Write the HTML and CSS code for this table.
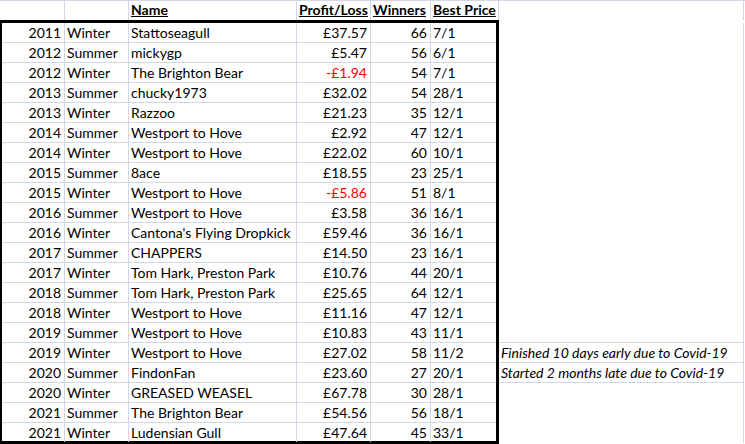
FILE: index.html
```html
<!DOCTYPE html>
<html>
<head>
<meta charset="utf-8">
<link rel="stylesheet" href="styles.css">
</head>
<body>
<div class="sheet">
  <div class="hdr">
    <div class="c ca"></div>
    <div class="c cb"></div>
    <div class="c cc h">Name</div>
    <div class="c cd h">Profit/Loss</div>
    <div class="c ce h">Winners</div>
    <div class="c cf h">Best Price</div>
    <div class="c cg"></div>
  </div>
  <div class="box">
    <div class="row"><div class="c ca r">2011</div><div class="c cb">Winter</div><div class="c cc">Stattoseagull</div><div class="c cd r">£37.57</div><div class="c ce r">66</div><div class="c cf">7/1</div></div>
    <div class="row"><div class="c ca r">2012</div><div class="c cb">Summer</div><div class="c cc">mickygp</div><div class="c cd r">£5.47</div><div class="c ce r">56</div><div class="c cf">6/1</div></div>
    <div class="row"><div class="c ca r">2012</div><div class="c cb">Winter</div><div class="c cc">The Brighton Bear</div><div class="c cd r neg">-£1.94</div><div class="c ce r">54</div><div class="c cf">7/1</div></div>
    <div class="row"><div class="c ca r">2013</div><div class="c cb">Summer</div><div class="c cc">chucky1973</div><div class="c cd r">£32.02</div><div class="c ce r">54</div><div class="c cf">28/1</div></div>
    <div class="row"><div class="c ca r">2013</div><div class="c cb">Winter</div><div class="c cc">Razzoo</div><div class="c cd r">£21.23</div><div class="c ce r">35</div><div class="c cf">12/1</div></div>
    <div class="row"><div class="c ca r">2014</div><div class="c cb">Summer</div><div class="c cc">Westport to Hove</div><div class="c cd r">£2.92</div><div class="c ce r">47</div><div class="c cf">12/1</div></div>
    <div class="row"><div class="c ca r">2014</div><div class="c cb">Winter</div><div class="c cc">Westport to Hove</div><div class="c cd r">£22.02</div><div class="c ce r">60</div><div class="c cf">10/1</div></div>
    <div class="row"><div class="c ca r">2015</div><div class="c cb">Summer</div><div class="c cc">8ace</div><div class="c cd r">£18.55</div><div class="c ce r">23</div><div class="c cf">25/1</div></div>
    <div class="row"><div class="c ca r">2015</div><div class="c cb">Winter</div><div class="c cc">Westport to Hove</div><div class="c cd r neg">-£5.86</div><div class="c ce r">51</div><div class="c cf">8/1</div></div>
    <div class="row"><div class="c ca r">2016</div><div class="c cb">Summer</div><div class="c cc">Westport to Hove</div><div class="c cd r">£3.58</div><div class="c ce r">36</div><div class="c cf">16/1</div></div>
    <div class="row"><div class="c ca r">2016</div><div class="c cb">Winter</div><div class="c cc">Cantona's Flying Dropkick</div><div class="c cd r">£59.46</div><div class="c ce r">36</div><div class="c cf">16/1</div></div>
    <div class="row"><div class="c ca r">2017</div><div class="c cb">Summer</div><div class="c cc">CHAPPERS</div><div class="c cd r">£14.50</div><div class="c ce r">23</div><div class="c cf">16/1</div></div>
    <div class="row"><div class="c ca r">2017</div><div class="c cb">Winter</div><div class="c cc">Tom Hark, Preston Park</div><div class="c cd r">£10.76</div><div class="c ce r">44</div><div class="c cf">20/1</div></div>
    <div class="row"><div class="c ca r">2018</div><div class="c cb">Summer</div><div class="c cc">Tom Hark, Preston Park</div><div class="c cd r">£25.65</div><div class="c ce r">64</div><div class="c cf">12/1</div></div>
    <div class="row"><div class="c ca r">2018</div><div class="c cb">Winter</div><div class="c cc">Westport to Hove</div><div class="c cd r">£11.16</div><div class="c ce r">47</div><div class="c cf">12/1</div></div>
    <div class="row"><div class="c ca r">2019</div><div class="c cb">Summer</div><div class="c cc">Westport to Hove</div><div class="c cd r">£10.83</div><div class="c ce r">43</div><div class="c cf">11/1</div></div>
    <div class="row"><div class="c ca r">2019</div><div class="c cb">Winter</div><div class="c cc">Westport to Hove</div><div class="c cd r">£27.02</div><div class="c ce r">58</div><div class="c cf">11/2</div></div>
    <div class="row"><div class="c ca r">2020</div><div class="c cb">Summer</div><div class="c cc">FindonFan</div><div class="c cd r">£23.60</div><div class="c ce r">27</div><div class="c cf">20/1</div></div>
    <div class="row"><div class="c ca r">2020</div><div class="c cb">Winter</div><div class="c cc">GREASED WEASEL</div><div class="c cd r">£67.78</div><div class="c ce r">30</div><div class="c cf">28/1</div></div>
    <div class="row"><div class="c ca r">2021</div><div class="c cb">Summer</div><div class="c cc">The Brighton Bear</div><div class="c cd r">£54.56</div><div class="c ce r">56</div><div class="c cf">18/1</div></div>
    <div class="row last"><div class="c ca r">2021</div><div class="c cb">Winter</div><div class="c cc">Ludensian Gull</div><div class="c cd r">£47.64</div><div class="c ce r">45</div><div class="c cf">33/1</div></div>
  </div>
  <div class="side">
    <div class="g"></div><div class="g"></div><div class="g"></div><div class="g"></div><div class="g"></div>
    <div class="g"></div><div class="g"></div><div class="g"></div><div class="g"></div><div class="g"></div>
    <div class="g"></div><div class="g"></div><div class="g"></div><div class="g"></div><div class="g"></div>
    <div class="g line"></div>
    <div class="g line note">Finished 10 days early due to Covid-19</div>
    <div class="g line note">Started 2 months late due to Covid-19</div>
    <div class="g"></div><div class="g"></div><div class="g"></div>
  </div>
</div>
</body>
</html>
```
FILE: styles.css
```css
html, body {
  margin: 0;
  padding: 0;
  background: #ffffff;
}
body {
  font-family: Lato, "Open Sans", sans-serif;
  font-size: 14px;
  color: #000000;
}
.sheet {
  width: 745px;
  height: 444px;
  display: grid;
  grid-template-columns: 499px 246px;
  grid-template-rows: 20px 424px;
  overflow: hidden;
}
.hdr {
  grid-column: 1 / 3;
  display: flex;
  border-top: 1px solid #d0d7e5;
  height: 19px;
}
.c {
  box-sizing: border-box;
  height: 19px;
  line-height: 17px;
  padding: 1px 2px 0 2px;
  white-space: nowrap;
  overflow: visible;
  border-right: 1px solid #d0d7e5;
}
.r {
  text-align: right;
  padding-right: 3px;
}
.hdr .c {
  padding-top: 0;
}
.h {
  font-weight: bold;
  text-decoration: underline;
}
.hdr .ca { width: 65px; }
.hdr .cb { width: 64px; }
.hdr .cc { width: 168px; }
.hdr .cd { width: 74px; }
.hdr .ce { width: 60px; }
.hdr .cf { width: 68px; }
.hdr .cg { width: 245px; }
.box {
  border-style: solid;
  border-color: #000000;
  border-width: 3px 3px 3px 2px;
  display: flex;
  flex-direction: column;
  height: 424px;
  box-sizing: border-box;
}
.row {
  display: flex;
  height: 20px;
  box-sizing: border-box;
  border-bottom: 1px solid #d0d7e5;
}
.row.last {
  border-bottom: none;
  height: 18px;
}
.box .ca { width: 63px; }
.box .cb { width: 64px; }
.box .cc { width: 168px; }
.box .cd { width: 74px; }
.box .ce { width: 60px; }
.box .cf { width: 65px; border-right: none; }
.neg { color: #ff0000; }
.side {
  display: flex;
  flex-direction: column;
  padding-top: 3px;
}
.g {
  box-sizing: border-box;
  width: 245px;
  height: 20px;
  border-right: 1px solid #d0d7e5;
  white-space: nowrap;
  line-height: 17px;
  padding: 1px 0 0 2px;
}
.g.line {
  border-bottom: 1px solid #d0d7e5;
}
.note {
  font-style: italic;
}
```
